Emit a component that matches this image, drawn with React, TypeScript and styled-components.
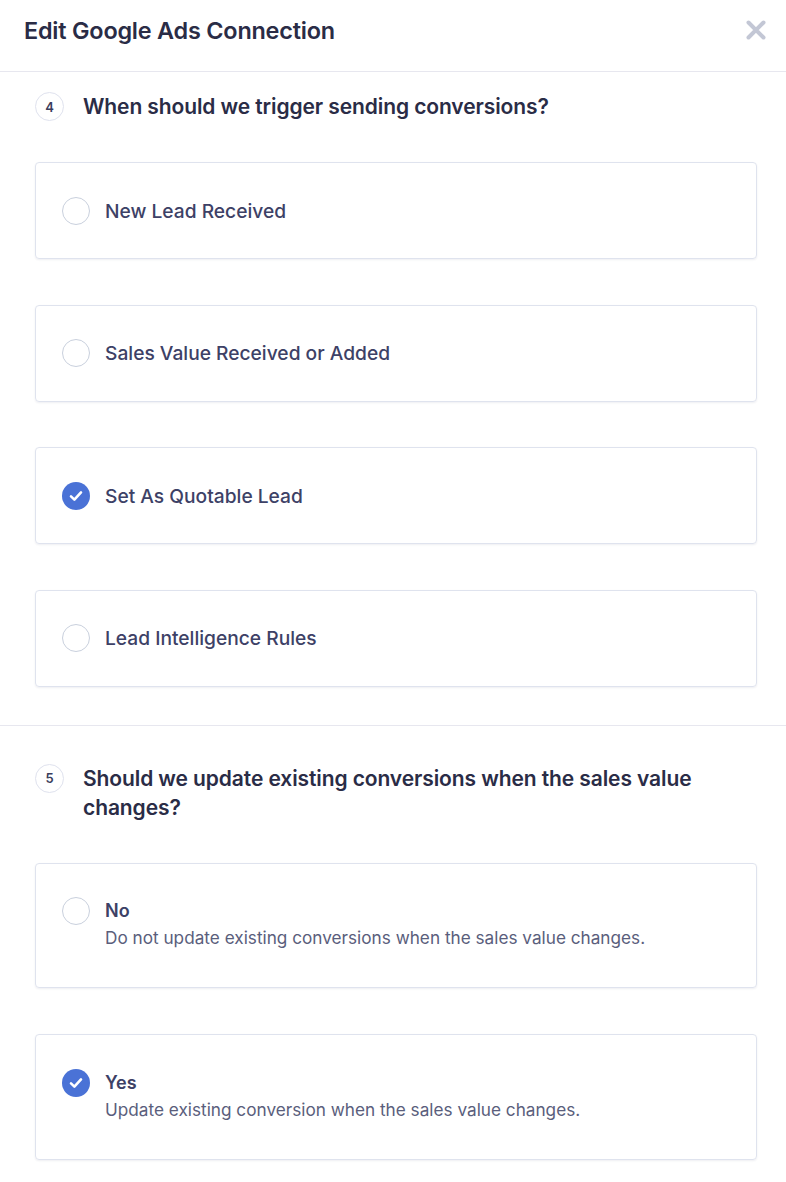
import React, {useState} from 'react';
import styled, {createGlobalStyle} from 'styled-components';

const GlobalStyle = createGlobalStyle`
  html, body {
    margin: 0;
    padding: 0;
    background: #ffffff;
  }
  body {
    font-family: Inter, "Noto Sans", "Liberation Sans", sans-serif;
    -webkit-font-smoothing: antialiased;
  }
`

const Modal = styled.div`
  width: 786px;
  background: #fff;
`
const Header = styled.div`
  display: flex;
  align-items: center;
  justify-content: space-between;
  height: 72px;
  padding: 0 18px 0 24px;
  border-bottom: 1px solid #e7e7ef;
  box-sizing: border-box;
`
const HeaderTitle = styled.h1`
  margin: 0;
  font-size: 23.4px;
  font-weight: 600;
  color: #2a2c46;
  letter-spacing: -0.2px;
  padding-bottom: 10px;
`
const CloseButton = styled.button`
  display: flex;
  align-items: center;
  justify-content: center;
  width: 24px;
  height: 24px;
  padding: 0;
  margin-bottom: 12px;
  border: none;
  background: none;
  cursor: pointer;
`
const Section = styled.section<{$divider?: boolean}>`
  padding: ${({$divider}) => ($divider ? '38px 29px 39px 35px' : '20px 29px 38px 35px')};
  border-bottom: ${({$divider}) => ($divider ? 'none' : '1px solid #e7e7ef')};
`
const QuestionRow = styled.div`
  display: flex;
  align-items: flex-start;
  gap: 19px;
  margin-bottom: 41px;
`
const StepBadge = styled.div`
  flex: none;
  display: flex;
  align-items: center;
  justify-content: center;
  width: 29px;
  height: 29px;
  border-radius: 50%;
  border: 1.5px solid #dfe2ee;
  box-sizing: border-box;
  font-size: 13px;
  font-weight: 600;
  color: #3a3d5c;
`
const Question = styled.h2`
  margin: 0;
  font-size: 21px;
  font-weight: 600;
  line-height: 29px;
  color: #2a2c46;
  letter-spacing: -0.1px;
`
const Options = styled.div<{$gap: number}>`
  display: flex;
  flex-direction: column;
  gap: ${({$gap}) => $gap}px;
`
const Card = styled.label<{$tall?: boolean}>`
  display: flex;
  align-items: ${({$tall}) => ($tall ? 'flex-start' : 'center')};
  gap: 15px;
  padding: ${({$tall}) => ($tall ? '33.5px 26px 37px' : '33.5px 26px')};
  border: 1px solid #dfe3ee;
  border-radius: 4px;
  box-shadow: 0 1px 2px rgba(40, 50, 90, 0.08);
  cursor: pointer;
`
const Radio = styled.span<{$checked: boolean}>`
  flex: none;
  display: flex;
  align-items: center;
  justify-content: center;
  width: 28px;
  height: 28px;
  border-radius: 50%;
  box-sizing: border-box;
  border: ${({$checked}) => ($checked ? 'none' : '1.5px solid #c9d0dd')};
  background: ${({$checked}) => ($checked ? '#4a72d6' : '#fff')};
`
const OptionText = styled.div`
  display: flex;
  flex-direction: column;
`
const OptionLabel = styled.span<{$bold?: boolean}>`
  font-size: ${({$bold}) => ($bold ? '18px' : '19.2px')};
  font-weight: ${({$bold}) => ($bold ? 600 : 500)};
  line-height: 28px;
  color: #3d4166;
`
const OptionDesc = styled.span`
  font-size: 17.2px;
  line-height: 25px;
  color: #5a5e7c;
`

const CheckIcon = () => (
	<svg width="16" height="16" viewBox="0 0 16 16" fill="none">
		<path d="M3 8.4 L6.4 11.6 L13 4.4" stroke="#fff" strokeWidth="2.6" strokeLinecap="round"
		      strokeLinejoin="round"/>
	</svg>
)

const CloseIcon = () => (
	<svg width="22" height="22" viewBox="0 0 22 22">
		<path d="M3.5 3.5 L18.5 18.5 M18.5 3.5 L3.5 18.5" stroke="#c3c7d5" strokeWidth="4" strokeLinecap="round"/>
	</svg>
)

const triggers = [
	'New Lead Received',
	'Sales Value Received or Added',
	'Set As Quotable Lead',
	'Lead Intelligence Rules',
]

const updates = [
	{id: 'no', title: 'No', desc: 'Do not update existing conversions when the sales value changes.'},
	{id: 'yes', title: 'Yes', desc: 'Update existing conversion when the sales value changes.'},
]

const App = () => {
	const [trigger, setTrigger] = useState('Set As Quotable Lead')
	const [update, setUpdate] = useState('yes')

	return (
		<Modal>
			<GlobalStyle/>
			<Header>
				<HeaderTitle>Edit Google Ads Connection</HeaderTitle>
				<CloseButton aria-label="Close"><CloseIcon/></CloseButton>
			</Header>

			<Section>
				<QuestionRow>
					<StepBadge>4</StepBadge>
					<Question>When should we trigger sending conversions?</Question>
				</QuestionRow>
				<Options $gap={45.5}>
					{triggers.map((t) => (
						<Card key={t} onClick={() => setTrigger(t)}>
							<Radio $checked={trigger === t}>{trigger === t && <CheckIcon/>}</Radio>
							<OptionLabel>{t}</OptionLabel>
						</Card>
					))}
				</Options>
			</Section>

			<Section $divider>
				<QuestionRow>
					<StepBadge>5</StepBadge>
					<Question>Should we update existing conversions when the sales value changes?</Question>
				</QuestionRow>
				<Options $gap={46}>
					{updates.map((u) => (
						<Card $tall key={u.id} onClick={() => setUpdate(u.id)}>
							<Radio $checked={update === u.id}>{update === u.id && <CheckIcon/>}</Radio>
							<OptionText>
								<OptionLabel $bold>{u.title}</OptionLabel>
								<OptionDesc>{u.desc}</OptionDesc>
							</OptionText>
						</Card>
					))}
				</Options>
			</Section>
		</Modal>
	);
};

export default App;
